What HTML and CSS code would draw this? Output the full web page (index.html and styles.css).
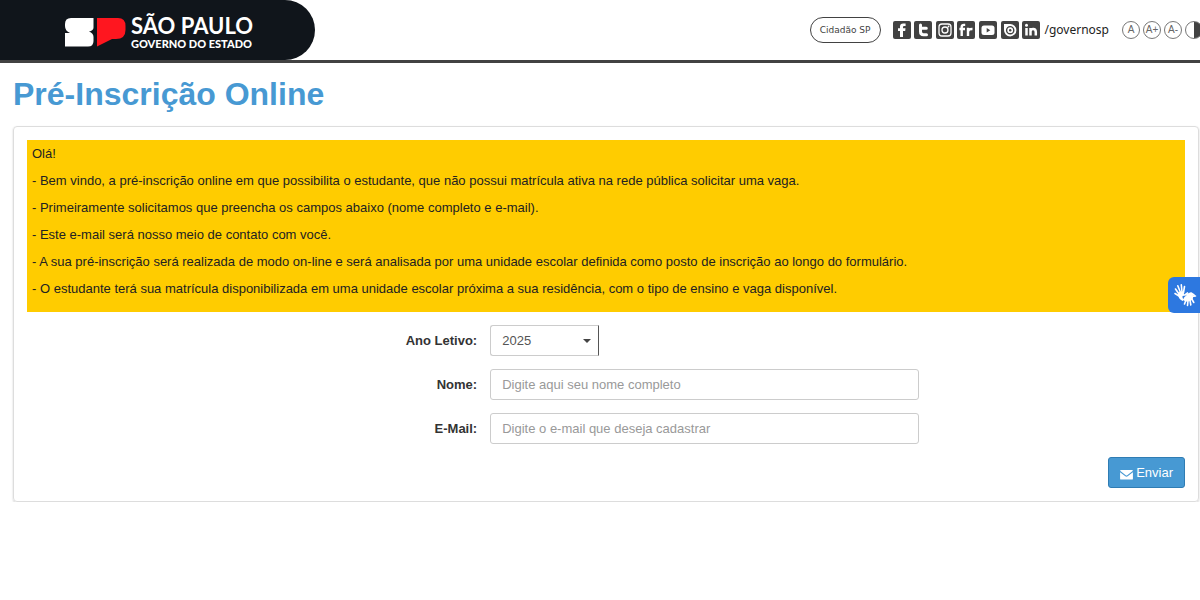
FILE: index.html
```html
<!DOCTYPE html>
<html lang="pt-BR">
<head>
<meta charset="utf-8">
<meta name="viewport" content="width=device-width, initial-scale=1">
<title>Pré-Inscrição Online</title>
<link rel="stylesheet" href="styles.css">
</head>
<body>
<header class="topbar">
  <div class="brand">
    <svg class="brand-mark" viewBox="0 0 61 30" aria-hidden="true">
      <path fill="#fff" d="M6 1H28.500V10.500Q28.500 13.500 24 14.500Q28.500 16 28.500 20V24Q28.500 29.500 23 29.500H0V16H5Q0 14 0 9V7Q0 1 6 1Z"/>
      <path fill="#ff161f" d="M32 1H53Q60.500 1 60.500 9V13Q60.500 22 51 22H47L32 29.500Z"/>
    </svg>
    <div class="brand-text">
      <span class="brand-name">SÃO PAULO</span>
      <span class="brand-sub">GOVERNO DO ESTADO</span>
    </div>
  </div>
  <nav class="tools">
    <a class="citizen" href="#">Cidadão SP</a>
    <div class="social">
      <a href="#" aria-label="Facebook"><svg viewBox="0 0 18 18"><rect width="18" height="18" rx="2" fill="#424242"/><path fill="#fff" d="M7 16V10H5V7.300H7V5.600Q7 2.400 10.200 2.400H12.600V5H11Q10 5 10 6V7.300H12.500L12.200 10H10V16Z"/></svg></a>
      <a href="#" aria-label="Twitter"><svg viewBox="0 0 18 18"><rect width="18" height="18" rx="2" fill="#424242"/><path fill="none" stroke="#fff" stroke-width="3" stroke-linecap="round" d="M6.500 4V10.500Q6.500 13.800 9.500 13.800H12.500M6.500 7.300H12.300"/></svg></a>
      <a href="#" aria-label="Instagram"><svg viewBox="0 0 18 18"><rect width="18" height="18" rx="2" fill="#424242"/><rect x="3" y="3" width="12" height="12" rx="3" fill="none" stroke="#fff" stroke-width="1.300"/><circle cx="9" cy="9" r="3" fill="none" stroke="#fff" stroke-width="1.300"/><circle cx="12.500" cy="5.500" r=".9" fill="#fff"/></svg></a>
      <a href="#" aria-label="Flickr"><svg viewBox="0 0 18 18"><rect width="18" height="18" rx="2" fill="#424242"/><path fill="none" stroke="#fff" stroke-width="2.400" d="M4.700 15V6Q4.700 3.900 7 3.900H8.200M2.400 8H8M11 15V6.800M11 10.500Q11.300 7.900 15.500 8"/></svg></a>
      <a href="#" aria-label="YouTube"><svg viewBox="0 0 18 18"><rect width="18" height="18" rx="2" fill="#424242"/><rect x="2.500" y="4.500" width="13" height="9.500" rx="2.500" fill="#fff"/><path fill="#424242" d="M7.700 7L11.300 9.200L7.700 11.400Z"/></svg></a>
      <a href="#" aria-label="Issuu"><svg viewBox="0 0 18 18"><rect width="18" height="18" rx="2" fill="#424242"/><path fill="#fff" d="M3 3H9A6.200 6.200 0 1 1 3 9Z"/><circle cx="9.200" cy="9.200" r="3.600" fill="none" stroke="#424242" stroke-width="1.400"/><circle cx="9.200" cy="9.200" r="1.200" fill="#424242"/></svg></a>
      <a href="#" aria-label="LinkedIn"><svg viewBox="0 0 18 18"><rect width="18" height="18" rx="2" fill="#424242"/><circle cx="4.500" cy="4.300" r="1.500" fill="#fff"/><path fill="none" stroke="#fff" stroke-width="2.500" d="M4.500 7V14.500M8.500 14.500V7M8.500 10.500Q8.700 8 11.200 8Q13.800 8 13.800 11V14.500"/></svg></a>
    </div>
    <span class="handle">/governosp</span>
    <div class="access">
      <button type="button" class="round">A</button>
      <button type="button" class="round">A+</button>
      <button type="button" class="round">A-</button>
      <button type="button" class="round contrast" aria-label="Contraste"></button>
    </div>
  </nav>
</header>

<main class="page">
  <h1 class="title">Pré-Inscrição Online</h1>
  <form class="card">
    <div class="notice">
      <p>Olá!</p>
      <p>- Bem vindo, a pré-inscrição online em que possibilita o estudante, que não possui matrícula ativa na rede pública solicitar uma vaga.</p>
      <p>- Primeiramente solicitamos que preencha os campos abaixo (nome completo e e-mail).</p>
      <p>- Este e-mail será nosso meio de contato com você.</p>
      <p>- A sua pré-inscrição será realizada de modo on-line e será analisada por uma unidade escolar definida como posto de inscrição ao longo do formulário.</p>
      <p>- O estudante terá sua matrícula disponibilizada em uma unidade escolar próxima a sua residência, com o tipo de ensino e vaga disponível.</p>
    </div>
    <div class="row">
      <label class="label" for="ano">Ano Letivo:</label>
      <div class="select-wrap">
        <select class="field" id="ano"><option>2025</option></select>
      </div>
    </div>
    <div class="row">
      <label class="label" for="nome">Nome:</label>
      <input class="field" id="nome" type="text" placeholder="Digite aqui seu nome completo">
    </div>
    <div class="row">
      <label class="label" for="email">E-Mail:</label>
      <input class="field" id="email" type="email" placeholder="Digite o e-mail que deseja cadastrar">
    </div>
    <div class="actions">
      <button type="submit" class="send">
        <svg viewBox="0 0 14 12" aria-hidden="true"><path fill="#fff" d="M1 1H13Q14 1 14 2L7.800 6.800Q7 7.300 6.200 6.800L0 2Q0 1 1 1ZM0 3.500L5.700 8Q7 8.900 8.300 8L14 3.500V10.500Q14 11.500 13 11.500H1Q0 11.500 0 10.500Z"/></svg>
        Enviar
      </button>
    </div>
  </form>
</main>

<button type="button" class="libras" aria-label="Libras">
  <svg viewBox="0 0 24 24" aria-hidden="true">
    <g fill="none" stroke="#fff" stroke-linecap="round" stroke-linejoin="round">
      <path stroke-width="1.600" d="M6 11L2.500 6M7.500 9.500L4.800 2.800M9 9L8.300 1.800M10.500 9.500L11.500 3.500M6 13L2 10.500"/>
      <path stroke-width="1.600" d="M13 17L11.500 21M15 17.500L14.500 22.500M17 17L17.800 22M18.500 15.500L20.800 19.500M19 13.500L22.500 13M14.500 11.500L18 10L21 12"/>
    </g>
    <path fill="#fff" d="M5 10Q7 8 10.800 9L11 11.500L14.500 9Q15.800 9.300 15 10.500L13 12.500L9.500 13Q9 15.500 11 17L9.500 18Q4.500 15 5 10ZM11.500 14L15 11L19 10.500Q21 13 19.500 16.500Q17 19 13 18.500L11.500 18Q9.500 16 11.500 14Z"/>
  </svg>
</button>
</body>
</html>
```
FILE: styles.css
```css
* { box-sizing: border-box; }

body {
  margin: 0;
  background: #fff;
  color: #333;
  font: 13px/18px "Liberation Sans", Arial, sans-serif;
  overflow-x: hidden;
}

.topbar {
  display: flex;
  align-items: center;
  height: 63px;
  border-bottom: 3px solid #424242;
  overflow: hidden;
}

.brand {
  display: flex;
  align-items: center;
  gap: 5px;
  flex: none;
  align-self: stretch;
  width: 315px;
  padding: 4px 0 0 65px;
  border-radius: 0 30px 30px 0;
  background: #10151b;
  color: #fff;
}

.brand-mark { width: 61px; height: 30px; }
.brand-text { display: flex; flex-direction: column; font-family: Lato, sans-serif; }
.brand-name { font-size: 22px; line-height: 22px; font-weight: 700; }
.brand-sub { font-size: 11px; line-height: 13px; font-weight: 900; }

.tools {
  display: flex;
  align-items: center;
  flex: none;
  margin: 0 -3px 0 auto;
}

.citizen {
  height: 26px;
  padding: 0 9px;
  border: 1px solid #424242;
  border-radius: 13px;
  color: #424242;
  font: 9px/24px "DejaVu Sans", sans-serif;
  text-decoration: none;
}

.social {
  display: flex;
  justify-content: space-between;
  width: 148px;
  margin-left: 12px;
}
.social a, .social svg { display: block; width: 18px; height: 18px; }

.handle {
  margin-left: 4px;
  color: #222;
  font: 12px/18px "Noto Sans", sans-serif;
}

.access { display: flex; gap: 3px; margin-left: 13px; }
.round {
  width: 18px;
  height: 18px;
  padding: 0;
  border: 1px solid #777;
  border-radius: 50%;
  background: #fff;
  color: #666;
  font: 10px/16px "Liberation Sans", Arial, sans-serif;
}
.contrast { background: linear-gradient(90deg, #fff 50%, #424242 50%); }

.page { padding: 14px 1px 0 13px; }
.title {
  margin: 0 0 14px;
  color: #4799d3;
  font-size: 32px;
  line-height: 35px;
  font-weight: 700;
}

.card {
  padding: 13px;
  border: 1px solid #ddd;
  border-radius: 4px;
  box-shadow: 0 1px 2px rgba(0, 0, 0, .2);
}

.notice { padding: 5px; background: #fc0; color: #222; }
.notice p { margin: 0 0 9px; }

.row { display: flex; margin-top: 13px; }
.label {
  width: 40%;
  padding: 7px 13px 0 0;
  font-weight: 700;
  text-align: right;
}
.field {
  width: 37%;
  height: 31px;
  padding: 0 11px;
  border: 1px solid #ccc;
  border-radius: 3px;
  background: #fff;
  color: #555;
  font: inherit;
}
.field::placeholder { color: #999; }

.select-wrap { position: relative; width: 109px; }
.select-wrap .field {
  width: 100%;
  appearance: none;
  border-right-color: #555;
  border-radius: 3px 0 0 3px;
}
.select-wrap::after {
  content: "";
  position: absolute;
  top: 14px;
  right: 8px;
  border: 4px solid transparent;
  border-top-color: #444;
  border-bottom: 0;
  pointer-events: none;
}

.actions { display: flex; justify-content: flex-end; margin-top: 13px; }
.send {
  display: flex;
  align-items: center;
  gap: 3px;
  height: 31px;
  padding: 0 11px;
  border: 1px solid #2f7cb3;
  border-radius: 3px;
  background: #4799d3;
  color: #fff;
  font: inherit;
}
.send svg { width: 13px; height: 11px; margin-top: 3px; }

.libras {
  position: fixed;
  top: 277px;
  right: 0;
  width: 32px;
  height: 36px;
  padding: 6px 5px;
  border: 0;
  border-radius: 6px 0 0 6px;
  background: #2d78e0;
}
.libras svg { display: block; width: 24px; height: 24px; }
```
